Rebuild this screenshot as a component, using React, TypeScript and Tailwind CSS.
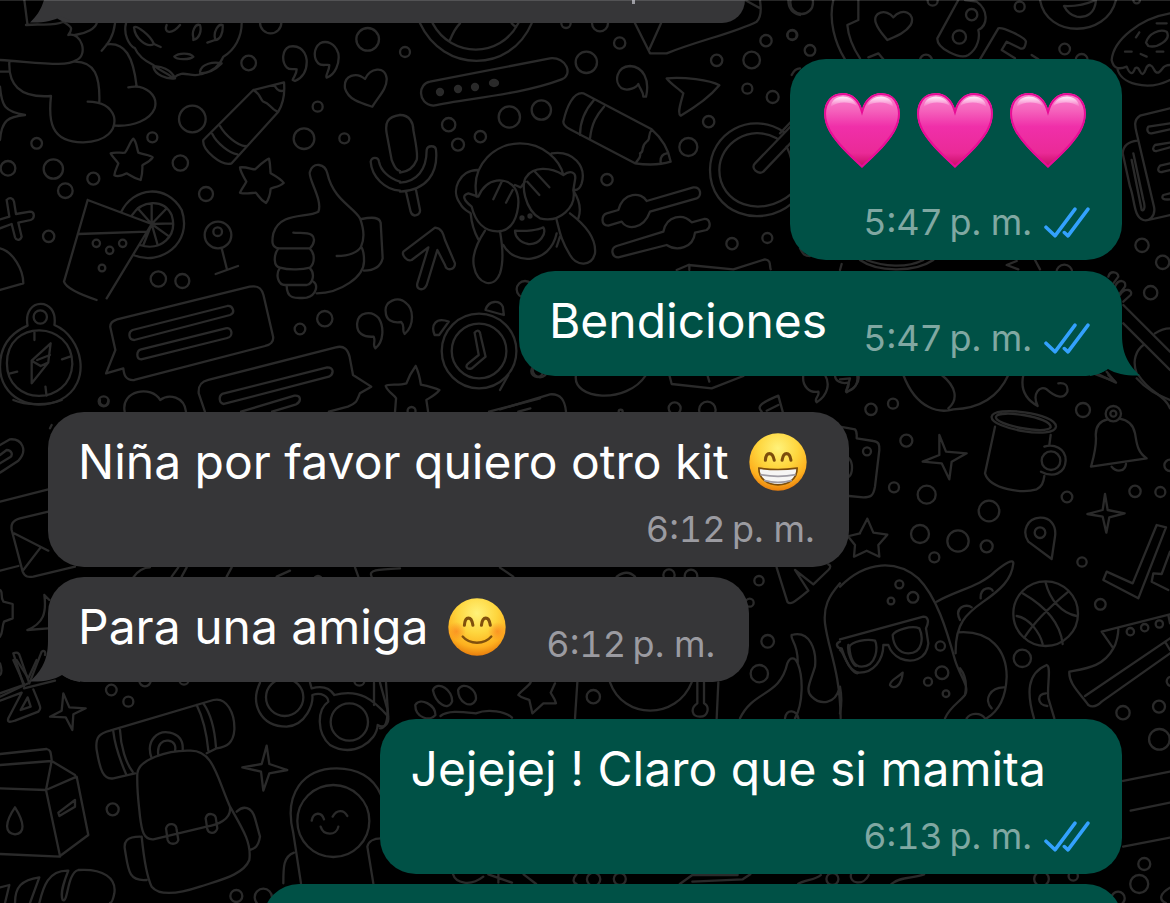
import type { ReactNode } from "react";

type Dot = [number, number, number];

function Patch({ x, y, sx = 1 / 3, sy = 1 / 3, d, dots }: { x: number; y: number; sx?: number; sy?: number; d: string; dots: Dot[] }) {
  return (
    <g transform={`translate(${x} ${y}) scale(${sx} ${sy})`}>
      <path d={d} vectorEffect="non-scaling-stroke" />
      {dots.map(([cx, cy, r], i) => (
        <ellipse key={i} cx={cx} cy={cy} rx={(r / sx) * (1 / 3)} ry={r} vectorEffect="non-scaling-stroke" />
      ))}
    </g>
  );
}

function Wallpaper() {
  return (
    <svg
      aria-hidden="true"
      className="absolute top-0 left-0"
      width="1170"
      height="903"
      viewBox="0 0 1170 903"
      fill="none"
      stroke="#2a2a2a"
      strokeWidth="2.3"
      strokeLinecap="round"
      strokeLinejoin="round"
    >
      {/* dog, donut, crayon, drink, thumbs up */}
      <Patch
        x={0}
        y={0}
        d={[
          "M73 0 L82 70 M78 75 C120 70 160 80 190 65 C215 80 220 85 205 105 C245 95 265 165 230 180 C200 200 140 190 0 180",
          "M28 185 C25 250 55 295 153 288 C145 360 150 428 250 427 C320 425 350 390 342 350 C330 315 300 305 263 305 M298 305 C300 230 285 185 225 185 M0 215 H28",
          "M225 105 C260 100 285 85 290 70 M345 70 C340 110 325 130 305 152 M320 133 C375 125 400 170 410 260 M385 262 C440 250 475 290 464 325 C450 360 400 380 345 377",
          "M0 260 C5 320 15 335 75 345 C25 350 5 360 0 420",
          "M378 70 C370 100 385 135 405 145 C415 170 440 185 460 195 C480 215 500 215 520 235 C550 205 570 235 605 222 C640 215 660 195 670 170 C705 150 725 110 725 70",
          "M402 82 C410 75 450 105 462 132 C440 145 405 115 402 82Z M462 132 L482 141 M500 75 C490 100 515 105 540 75 M580 112 C575 95 585 70 600 75 C605 90 600 115 580 120Z M645 115 C640 95 655 70 668 75 C670 100 660 120 645 120 L622 128",
          "M523 170 C535 158 570 158 580 170 C570 180 530 180 523 170Z M460 200 C480 195 515 210 525 235 C500 238 465 225 460 200Z M600 215 C605 190 640 185 665 190 C650 205 625 220 600 220",
          "M885 243 C905 235 922 215 920 180 C915 145 890 135 868 140 C845 150 845 185 860 202 C870 212 885 205 890 208 C890 225 880 230 878 240Z M980 233 C1005 225 1020 190 1015 160 C1005 130 980 120 960 130 C940 145 940 175 955 190 C965 200 980 192 988 195 C988 215 975 225 980 233Z",
          "M1035 265 C1030 225 1070 215 1095 237 C1110 205 1155 195 1160 235 C1162 265 1135 290 1117 320 C1085 310 1045 300 1035 265Z",
          "M610 420 L760 270 L852 247 C855 280 850 310 835 335 L695 490 C665 500 605 450 610 420Z M760 270 C785 285 780 300 790 305 C810 310 810 325 832 335 M823 255 C830 270 840 275 850 272 M637 402 C650 430 690 460 712 463 M660 378 C675 405 715 440 738 438",
          "M400 416 C410 425 410 445 415 458 C435 465 450 465 458 472 C450 485 435 490 427 496 C428 515 425 530 422 540 C400 535 390 525 380 520 C365 528 350 530 343 526 C345 510 352 500 355 490 C345 475 332 465 332 460 C345 455 365 460 375 458 C385 445 390 425 400 416Z",
          "M807 476 C812 495 810 510 812 520 C830 530 845 540 851 549 C840 560 820 562 812 566 C810 590 805 600 798 609 C780 600 775 585 767 578 C745 580 725 583 720 578 C725 565 735 555 739 545 C730 530 720 510 720 502 C740 500 755 508 765 508 C780 495 795 480 807 476Z",
          "M263 600 L192 845 C200 870 260 890 290 900 M263 600 L455 672 L320 895 M235 702 L442 695",
          "M363 637 C400 560 500 550 545 630 C580 730 480 800 400 765 M395 647 C425 600 490 595 515 645 C535 710 480 755 420 735 M455 672 V610 M455 672 L413 625 M455 672 L498 627 M455 672 L518 670 M455 672 L508 710 M455 672 L473 735 M455 672 L430 735",
          "M20 600 C30 590 40 595 42 605 L48 642 L90 635 C105 635 105 655 92 660 L55 668 L65 710 C60 725 48 720 45 712 L35 672 L0 685 M0 658 L28 650 L20 600",
          "M665 745 L680 805 M647 822 L714 798 M0 745 C40 755 70 810 70 850 L0 870",
          "M955 635 C970 600 920 530 930 515 C940 485 975 490 982 520 C1000 600 1060 620 1080 655 C1095 695 1090 725 1083 740 C1075 755 1050 768 1010 768 M955 635 C920 655 840 635 820 700 C815 725 815 742 835 745 H930 C945 730 945 712 935 705 C920 695 900 700 880 698 M835 745 C820 765 820 800 840 803 C870 812 910 808 930 803 C945 790 945 760 930 747 M840 803 C825 825 835 855 855 855 H920 C940 850 945 820 930 805 M860 857 C860 900 890 895 920 893 C950 885 955 855 940 845 M950 880 C1020 880 1095 830 1092 780 C1092 755 1087 745 1083 740 M1085 657 C1120 650 1138 652 1142 668 L1148 775 C1142 800 1120 812 1092 812",
          "M1200 345 C1160 350 1155 370 1160 400 L1175 480 C1185 505 1190 510 1200 513 M1112 485 C1115 470 1135 470 1137 485 C1142 510 1165 535 1200 545 M1112 485 C1115 530 1155 570 1200 572",
        ].join(" ")}
        dots={[[812, 68, 32], [746, 189, 22], [1103, 118, 34], [577, 357, 40], [953, 320, 15], [912, 416, 31], [1033, 415, 15], [457, 412, 15], [541, 489, 23], [110, 430, 16], [24, 505, 22], [160, 507, 29], [280, 536, 18], [196, 572, 22], [618, 582, 21], [146, 709, 17], [475, 837, 23], [547, 843, 21], [289, 730, 11], [329, 751, 11], [368, 730, 11], [306, 804, 10], [654, 705, 40], [653, 695, 13]]}
      />
      {/* gauge, field, crayon, cursor, monkey, sliders */}
      <Patch
        x={400}
        y={0}
        d={[
          "M60 70 C130 220 330 220 395 70 M98 70 C155 175 300 175 355 70 M150 120 C160 95 170 80 180 70 M335 70 L348 82",
          "M90 245 L450 175 C500 170 520 225 485 238 C360 285 200 295 100 317 C50 310 55 250 90 245Z",
          "M490 365 C500 320 520 275 550 280 L755 388 C780 410 805 445 812 485 C780 495 740 495 705 490 L510 388 C495 380 490 372 490 365Z M540 405 C540 360 555 330 582 300 M570 415 C575 370 590 345 612 320 M755 390 C740 405 755 415 740 425 C720 440 735 455 720 460 C725 475 710 480 707 490 M782 488 C780 470 790 462 800 460",
          "M738 290 C750 240 730 200 690 198 C650 200 640 245 665 265 C685 275 710 262 715 252 C720 268 730 275 730 290Z",
          "M800 235 C850 230 930 240 958 256 C930 290 880 325 842 347 C830 340 845 300 850 280 C835 265 810 250 800 235Z",
          "M705 70 L750 160 H800 C900 120 1000 100 1070 65 C1090 45 1080 10 1080 0 M748 148 L783 70 M1035 0 L1080 25 M1165 0 C1165 25 1180 40 1200 45",
          "M0 345 C30 345 40 370 40 390 C45 420 55 460 50 480 C40 505 25 515 0 518 M0 548 C50 545 80 510 80 450 C82 435 107 435 108 450 C115 520 80 570 0 575 M18 575 L32 635 C38 655 62 645 60 630 L48 570",
          "M105 683 C125 685 130 700 135 720 L165 790 C165 810 140 815 135 795 L112 750 L80 855 C70 875 48 870 52 850 L85 742 L35 780 C20 785 5 765 10 755 L105 683Z",
          "M230 590 C210 490 290 430 360 430 C430 430 480 480 490 525 M490 525 C510 510 530 515 525 540 L520 570 C530 620 480 670 420 655 C375 630 360 550 380 530 C400 500 450 500 490 525 M235 590 C260 530 320 530 345 565 C365 600 355 680 305 693 C250 700 225 660 215 620 C190 600 185 585 205 580 L235 590 M345 555 L362 562 L375 545",
          "M232 510 C180 510 150 570 180 610 C190 630 205 635 210 638 M455 460 C520 450 560 500 545 550 C540 565 535 570 525 570 M212 640 C215 675 225 700 235 718 M520 572 C545 610 542 635 535 655 M305 545 L280 598 M338 570 L318 608 M405 515 L448 562 M382 545 L418 585",
          "M345 692 C380 695 415 690 430 682 C440 700 420 735 385 732 C360 728 345 710 345 692Z M255 692 C230 730 215 770 222 800 C230 850 280 870 300 820 C310 790 310 750 300 695 M510 640 C550 670 590 710 585 760 C575 800 530 800 510 765 C485 725 480 700 470 660 M310 735 C340 795 450 795 470 700 M470 740 L480 710",
          "M740 603 L880 562 C905 560 905 590 890 595 L750 635 C730 690 680 690 665 665 L625 677 C600 675 605 645 620 640 L655 630 C670 575 725 575 740 603Z M790 695 L650 738 C630 745 635 772 655 772 L800 735 C830 755 880 745 885 698 L920 690 C935 680 930 655 912 657 L875 667 C850 640 800 645 790 695Z",
          "M1150 395 C1050 330 930 400 930 510 C930 640 1080 690 1176 610 M1130 415 C1050 370 958 430 958 510 C958 610 1080 660 1176 580 M1176 375 L1065 490 C1050 505 1075 525 1090 515 L1176 425 M830 810 L865 795 L1000 808 L1095 778 C1115 780 1108 800 1112 808 M868 795 V810",
        ].join(" ")}
        dots={[[15, 156, 15], [600, 70, 24], [498, 70, 14], [659, 129, 17], [559, 187, 32], [328, 351, 32], [424, 330, 29], [146, 374, 20], [174, 434, 18], [241, 410, 17], [950, 181, 17], [1055, 180, 25], [1098, 122, 17], [1176, 105, 14], [1042, 266, 15], [1118, 291, 18], [926, 365, 17], [865, 441, 27], [621, 539, 17], [996, 731, 17], [1102, 714, 15], [375, 868, 25]]}
      />
      <g fill="#2a2a2a">
        <circle cx="440" cy="92" r="3" />
        <circle cx="458" cy="89" r="3" />
        <circle cx="475" cy="87" r="3" />
        <ellipse cx="494" cy="83" rx="4" ry="3" />
        <circle cx="522" cy="218" r="1.500" />
        <circle cx="530" cy="216" r="1.500" />
      </g>
      {/* phone, letters, donut, newspaper */}
      <Patch
        x={780}
        y={0}
        d={[
          "M160 0 C145 60 165 130 195 178 M235 0 V60 L202 75 C205 110 220 145 240 175 M265 172 L295 160 L310 178",
          "M288 70 C275 35 320 25 340 52 C365 20 410 40 392 75 C375 100 345 110 322 120 C310 105 295 90 288 70Z",
          "M535 0 L472 115 C470 145 540 180 565 165 C595 145 600 110 595 90 C625 75 625 30 590 5 L555 0 M600 178 L655 85 C665 80 735 110 738 125 C735 145 730 148 720 145 L680 125 L665 150 L705 175 M755 165 L775 178",
          "M780 0 C800 115 980 115 1008 0 M852 18 C890 20 925 10 948 0 C945 40 920 55 890 50 C870 45 858 30 852 18Z",
          "M1170 40 C1080 55 1000 120 995 180 C1000 205 1015 210 1040 200 C1050 225 1058 225 1065 205 C1078 195 1080 225 1088 222 C1100 215 1095 195 1110 195 C1125 200 1120 220 1135 218 C1150 210 1145 195 1170 195 M1012 205 C1020 250 1100 275 1170 240 M1098 128 C1105 100 1140 85 1160 95 C1175 120 1130 145 1105 138Z M1130 70 H1160 M1078 97 L1068 112 M1035 155 H1055 M1082 162 L1100 170 M1130 155 H1150",
          "M1170 325 L1080 347 C1060 360 1065 380 1070 400 L1122 620 C1128 650 1105 665 1090 660 C1060 650 1065 600 1050 560 L1028 460 C1030 435 1045 425 1072 422 M1105 660 L1170 645 M1060 460 L1090 600 C1098 625 1090 635 1085 630 L1055 480 M1170 370 L1105 380 C1098 390 1105 402 1115 400 L1170 388 M1170 428 L1125 435 C1115 445 1120 455 1130 453 L1170 442 M1170 490 L1140 497 C1130 508 1135 520 1150 515 L1170 510 M1170 580 L1150 585 C1142 595 1150 600 1170 598",
          "M0 400 L38 360 M20 440 C40 480 45 520 35 570 M35 225 C42 210 50 205 60 205 M60 745 C70 765 75 768 90 768 M240 780 C290 815 400 820 460 780 M260 780 C310 800 380 805 430 780 M185 792 L180 810 M710 783 L680 795 L715 808 M765 780 L780 808",
          "M985 830 C990 810 1015 815 1015 830 L1000 850 M1005 860 C1015 835 1040 840 1035 860 L1018 882 M1020 885 C1035 860 1060 870 1052 885 L1030 905 M1030 915 L1170 1055 M1030 970 L1170 1110 M1125 1000 C1140 990 1155 985 1170 985 M1070 1120 C1055 1080 1070 1050 1090 1035 M980 1115 L1005 1145 L940 1120 M1070 1135 C1110 1180 1150 1190 1170 1200",
        ].join(" ")}
        dots={[[37, 105, 15], [90, 151, 16], [65, 8, 34], [458, 2, 15], [719, 20, 15], [575, 44, 17], [538, 111, 20], [438, 182, 18], [854, 147, 16], [905, 180, 18], [1070, 0, 10], [1086, 736, 20], [1148, 787, 20], [1112, 878, 20], [853, 818, 24]]}
      />
      {/* compass, speech boxes, alarm clock */}
      <Patch
        x={0}
        y={260}
        sx={0.3444}
        sy={0.3333}
        d={[
          "M80 197 C65 110 170 110 158 195 C240 230 270 370 175 420 C90 460 0 410 0 320 C0 250 40 215 80 197 M20 310 C20 175 210 180 210 312 C205 440 20 440 20 310Z M100 217 V240 M180 298 L203 290 M30 340 L50 335 M132 380 L135 407 M147 250 L92 302 V370 L140 308 L147 250 M92 302 L118 318 L140 308 M108 300 L145 285",
          "M340 178 L725 80 C750 75 760 85 765 105 L793 230 C795 245 785 255 770 258 L390 360 C365 362 360 345 358 325 L308 340 L335 270 L320 200 C320 190 328 182 340 178Z M385 210 L660 138 C675 135 685 158 668 165 L390 240 C372 240 372 215 385 210Z M410 268 L655 205 C675 200 678 230 660 234 L410 298 C395 298 395 272 410 268Z",
          "M595 455 L577 400 C575 375 585 365 605 360 L975 262 C1000 255 1010 270 1015 290 L1025 345 L1078 380 L1045 400 C1035 425 1035 430 1010 440 L955 455 M645 402 L950 322 C970 322 970 342 955 350 L650 432 C635 430 635 408 645 402Z M700 455 L855 407 C875 405 875 425 860 433 L790 455",
          "M362 455 C350 390 440 375 465 420 C490 400 535 410 540 455",
          "M1090 265 C1115 245 1115 200 1100 175 C1080 150 1040 155 1037 190 C1035 220 1055 232 1085 230 C1092 245 1080 255 1090 265Z M1175 222 C1205 195 1200 145 1180 130 C1155 105 1115 125 1120 155 C1120 180 1140 190 1165 186 C1178 200 1165 210 1175 222Z",
          "M1207 318 C1215 335 1220 360 1222 374 C1240 378 1265 385 1276 390 C1265 405 1245 415 1238 420 L1243 455 M1207 318 C1195 335 1185 355 1180 370 C1160 378 1125 370 1120 378 C1125 395 1145 405 1150 415 L1147 455",
          "M1262 225 C1250 195 1265 170 1303 185 L1275 225Z M1410 148 C1420 120 1450 120 1460 140 L1463 165 L1410 150 M1378 218 C1388 205 1395 215 1395 225 L1410 290 L1370 325 C1355 330 1350 318 1360 310 L1390 285Z",
          "M1420 455 L1568 415 M1505 455 L1540 445",
        ].join(" ")}
        dots={[[117, 171, 20], [301, 424, 15], [871, 207, 16], [943, 176, 23], [1391, 273, 112], [1391, 273, 82], [1195, 453, 12], [1560, 333, 18]]}
      />
      {/* paperclip, envelope, gear */}
      <Patch
        x={0}
        y={400}
        d={[
          "M0 135 L30 118 C65 115 85 150 55 182 L0 218 M0 165 L20 150 C35 150 40 165 30 172 L0 190",
          "M0 305 L145 268 M145 335 L60 355 C35 362 33 375 35 390 L68 515 C75 532 85 532 100 530 L225 500 M42 400 L145 452 M70 510 L122 442 M0 512 L55 498",
          "M0 570 C10 575 0 590 10 605 L38 612 V655 L12 665 C5 680 10 695 0 710 M133 585 L148 600 M133 585 C140 640 130 670 82 690 L145 685 M0 790 C5 805 5 820 0 825",
          "M40 760 C50 755 58 758 60 770 L88 850 L125 755 C132 750 138 755 135 765 M40 760 L72 860 M0 890 L85 850",
          "M40 0 C80 18 150 15 185 0 M300 0 C295 20 325 25 325 0 M150 85 L155 75",
          "M400 532 C415 510 435 502 450 502 M535 502 L515 530 M560 502 L545 530 M680 530 L695 502 M830 530 L870 512 M1065 502 L1075 530 M1115 530 C1105 510 1130 508 1200 505",
        ].join(" ")}
        dots={[[954, 540, 12]]}
      />
      {/* juice box, sparkles, backpack, binoculars, hooded figure */}
      <Patch
        x={0}
        y={660}
        d={[
          "M40 0 L72 72 M50 0 L85 55 L110 0 M0 100 L70 75 M72 85 L165 62 M65 98 L0 122 M65 98 L25 175 C20 190 35 185 45 182 L115 155 C125 145 120 140 115 125 L100 88 M83 112 L62 150 L92 140Z",
          "M190 100 L208 142 L257 145 L220 163 L217 210 L197 172 L150 170 L185 152Z M800 257 L808 312 L862 330 L808 340 L790 392 L783 335 L727 322 L785 312Z",
          "M0 282 L140 267 C152 270 152 275 155 300 M0 315 L155 303 M155 303 L138 390 L0 385 M155 303 L225 345 M138 390 L230 350 L265 525 L180 588 L138 390 M0 582 L180 590 M45 442 C75 490 75 520 45 523 C15 520 12 490 45 442Z M175 458 L225 420 V440 L178 468Z",
          "M290 270 C285 230 300 220 330 212 L640 120 C680 110 705 160 703 210 C700 250 680 260 650 265 L620 280 M290 270 C300 330 310 360 340 355 L405 340 M340 215 C345 260 360 300 378 342 M360 210 C362 260 378 310 398 335 M590 135 C610 175 620 220 625 272 M610 130 C635 165 645 220 648 262",
          "M455 295 C435 240 475 210 510 218 C540 225 550 245 548 270 M475 285 C470 250 490 240 505 242 C525 245 528 260 525 272",
          "M412 340 C415 300 500 270 570 272 C640 270 650 350 690 440 C695 480 650 495 620 500 L460 538 C430 540 425 510 420 470 C415 420 410 390 412 340 M425 530 C430 580 440 650 455 680 C480 710 540 700 600 680 C660 660 730 645 748 600 C755 550 730 510 690 440 M420 530 C380 530 370 545 375 570 C385 630 385 665 440 660 M710 455 C730 435 755 440 765 475 L780 530 C775 560 765 565 750 570",
          "M498 505 C505 485 530 490 530 510 L535 540 C530 555 508 555 503 540Z M617 475 C622 455 648 460 648 478 L652 505 C645 525 625 520 622 508Z",
          "M780 68 C750 130 780 200 860 200 C920 195 940 130 937 105 C965 95 985 110 985 125 C950 150 950 220 990 255 C1060 295 1130 245 1133 195 C1150 205 1165 195 1165 175 L1158 68 M930 68 L935 85 C970 75 990 85 1003 105 C1080 85 1120 120 1165 170 M1122 68 V135",
          "M903 670 L880 520 C850 400 910 325 1010 325 C1070 325 1120 350 1143 405 M850 670 C850 620 850 590 882 578 M1120 670 L1102 560 C1105 545 1120 535 1143 535 M935 482 C940 455 965 455 972 478 M998 470 C1010 448 1032 448 1042 468 M962 500 C970 528 1010 528 1015 500",
          "M0 682 L28 675 L15 729 M45 729 C45 680 65 660 118 652 L90 729 M118 729 C130 680 145 630 205 632 C190 670 180 700 188 720 C205 730 200 640 235 630 C310 625 350 655 343 700 C340 715 335 729 330 729",
        ].join(" ")}
        dots={[[334, 90, 16], [385, 125, 15], [338, 448, 18], [435, 62, 17], [552, 60, 14], [1078, 62, 15], [854, 112, 56], [1048, 186, 56], [1000, 483, 108], [709, 708, 18], [790, 712, 26]]}
      />
      {/* mug, bell, sparkles, octopus, basketball, shoe */}
      <Patch
        x={840}
        y={370}
        d={[
          "M0 28 L30 25 L18 65 C45 60 55 40 52 18 M190 15 C230 120 300 130 340 118 C430 115 480 70 505 15 M305 15 C350 50 355 90 325 115 M550 15 C540 60 560 90 593 108 C575 70 600 45 620 58 C645 80 670 90 682 65 C685 45 675 38 655 40 M780 15 L828 38 L805 15 M895 15 C930 70 975 75 990 115",
          "M0 170 L45 178 C52 185 50 195 50 205 L100 213 C118 215 118 225 118 240 L105 350 C100 380 90 382 70 382 L27 378 M27 265 C40 280 38 310 27 320",
          "M298 195 L318 245 L380 250 L335 275 L328 328 L305 280 L248 275 L298 255Z M795 372 L803 420 L854 430 L808 442 L799 488 L788 440 L742 432 L788 420Z",
          "M455 140 C460 105 650 130 648 170 C645 210 450 175 455 140Z M468 140 C475 118 635 140 632 172 C620 195 460 165 468 140Z M465 170 L435 310 C450 360 550 370 590 358 C605 350 610 340 613 318 M632 195 L628 225 M613 230 C640 220 678 235 677 272 C675 310 640 325 603 305",
          "M803 148 C770 155 765 180 768 205 C768 240 760 265 753 290 L920 265 C890 245 890 215 885 190 C880 165 865 150 838 146 M815 290 C830 308 855 305 858 282",
          "M82 446 L100 488 L142 494 L115 525 L118 560 L80 542 L42 560 L45 525 L25 500 M60 488 L82 446 M27 498 L60 490",
          "M635 567 L645 500 C650 465 630 442 600 443 C560 445 545 485 565 515Z",
          "M790 630 L800 605 L878 640 L950 465 L978 472 L895 685Z M990 545 L965 612 L940 610 L935 635 L985 660",
          "M0 650 C80 570 170 570 235 625 C290 680 320 780 345 870 C360 920 390 950 375 975 C355 1000 330 1010 315 1045 M290 695 C350 660 420 650 465 605 C495 580 520 565 520 580 C515 630 480 660 430 695 C380 730 345 760 347 850 M355 787 C450 780 500 840 500 920 C498 980 480 1020 440 1045 M360 895 C380 920 380 950 375 975 M360 750 C340 710 380 700 395 712 M422 685 C420 650 455 650 458 662 M495 952 C450 950 430 990 455 1015 M380 1045 C390 1030 420 1025 435 1045",
          "M0 808 L250 740 C265 740 268 755 258 775 L265 820 C260 870 215 880 180 865 C160 855 150 840 145 825 L130 825 C130 870 100 910 55 908 C20 900 15 850 0 840 M28 830 C35 815 80 805 105 812 C115 830 110 890 65 890 C40 890 30 860 28 830Z M158 795 C165 780 215 765 238 775 C250 800 250 850 205 850 C175 850 160 825 158 795Z M188 908 C170 925 150 930 150 945 C160 960 185 950 188 908Z M0 1030 C8 990 0 950 0 950",
          "M548 670 C600 700 660 750 668 822 M530 738 C570 745 600 790 608 822 M617 638 C630 690 665 730 710 738 M685 665 C630 710 580 760 553 803",
          "M990 733 L785 785 L820 835 C830 820 835 790 835 778 M820 835 C790 890 740 895 688 905 C685 940 720 970 745 1005 C760 1015 775 1005 785 995 L990 850 M735 978 L990 805 M975 815 L990 840 M985 735 L990 760",
          "M582 1045 C560 970 560 910 620 885 C635 890 620 950 625 985 L643 1045 M618 970 C590 970 590 1005 622 1008",
        ].join(" ")}
        dots={[[93, 118, 17], [159, 101, 15], [199, 212, 18], [162, 352, 15], [81, 244, 12], [260, 374, 27], [240, 492, 27], [283, 562, 15], [354, 513, 32], [447, 423, 31], [440, 529, 18], [681, 381, 16], [729, 120, 21], [820, 131, 23], [820, 131, 9], [633, 272, 28], [600, 488, 16], [726, 576, 14], [781, 703, 16], [885, 364, 17], [961, 366, 15], [990, 286, 17], [178, 643, 12], [219, 682, 16], [153, 693, 10], [301, 828, 14], [306, 908, 19], [264, 935, 12], [318, 971, 10], [617, 731, 97], [547, 865, 26], [871, 785, 11], [914, 773, 11], [958, 762, 11], [849, 1028, 20], [957, 1010, 18], [994, 934, 14]]}
      />
      {/* doodles between the middle bubbles */}
      <Patch
        x={500}
        y={370}
        d={[
          "M0 60 L25 15 M228 15 C215 90 380 105 438 15 M508 15 L515 42 L635 55 L730 18 M622 15 L628 35 M0 118 L150 73 C185 70 195 95 198 125 M910 15 C905 50 930 70 955 65 C960 80 940 85 950 97 C985 75 990 40 975 15 M1005 15 C1005 35 1025 42 1045 38 C1050 55 1035 55 1040 67 C1070 50 1080 35 1075 15",
          "M785 125 C770 110 780 100 835 77 L848 125 M800 122 L835 105",
          "M830 593 L862 695 C870 705 880 700 925 662 L885 600 L940 643 L985 600 C995 590 990 585 985 583",
          "M1020 640 C985 680 970 710 975 760 C985 840 1020 900 1022 1045 M1020 815 C1005 820 1010 835 1025 835 C1045 900 1070 915 1075 908 M1045 825 C1040 850 1060 885 1068 888",
          "M875 795 C930 780 950 840 945 890 C930 940 915 960 935 980 C960 1005 1005 1005 1018 955 M875 795 C870 810 895 820 893 880 C910 920 910 1000 885 1045 M720 1045 C760 960 840 980 862 880 C870 860 885 860 893 880 M855 1045 C860 1015 890 1020 895 1045",
          "M330 937 C370 1050 530 1050 575 937 M232 937 L225 1045 M655 937 L650 1045 M592 937 V1000 C570 1015 575 1040 600 1040 C625 1040 630 1010 612 1000 V937",
          "M92 937 C85 950 60 965 55 975 C65 985 80 985 88 990 L97 1030 L130 1000 L168 1000 C165 985 155 975 152 968 L165 940",
          "M0 593 L40 620 M350 620 C370 605 390 605 405 620",
        ].join(" ")}
        dots={[[120, 0, 22], [524, 115, 18], [622, 120, 25], [362, 125, 6], [777, 632, 14], [749, 698, 12], [803, 814, 19], [778, 911, 26], [280, 980, 20], [507, 615, 17], [573, 618, 19]]}
      />
      {/* paw, strings, lower right */}
      <Patch
        x={380}
        y={680}
        sx={0.5038}
        sy={0.3333}
        d={[
          "M0 8 L15 90 C15 130 8 145 0 145 M105 30 C115 0 145 30 143 65 C135 95 110 70 105 30Z M155 30 C165 0 195 30 190 60 C180 90 155 65 155 30Z M70 75 C80 50 110 75 110 105 C100 125 70 115 70 75Z M120 108 C135 90 160 95 190 100 C215 85 250 95 262 113",
          "M1475 303 L1568 275 M1490 392 L1568 368 M1475 500 L1568 473",
          "M145 583 C150 610 180 620 205 590 M215 583 L262 608 M235 583 V608 M285 583 L310 612 M390 583 C380 600 385 610 390 612 M595 612 L620 585 L710 585 M620 605 L720 598 L735 583 M830 612 C840 600 865 600 875 585 M935 583 C930 610 960 620 970 585 M1015 612 C1030 590 1060 595 1080 583 M1568 623 C1548 640 1545 660 1560 669",
        ].join(" ")}
        dots={[[1547, 178, 31], [1517, 552, 18], [1507, 612, 27], [424, 598, 20], [476, 597, 18], [898, 597, 18], [1313, 597, 22], [1376, 588, 14], [1465, 655, 20]]}
      />
    </svg>
  );
}

function Tail({ side }: { side: "left" | "right" }) {
  const left = side === "left";
  return (
    <svg
      aria-hidden="true"
      className={left ? "absolute bottom-0 -left-[18px] text-[#363638]" : "absolute -right-[18px] bottom-0 -scale-x-100 text-[#005146]"}
      width="50"
      height="41"
      viewBox="0 0 50 41"
      fill="currentColor"
    >
      <path d="M18 0C18 22 9 32 0 40.500C12 41 24 39 32 34C38 38 44 40 50 41V0Z" />
    </svg>
  );
}

function Ticks() {
  return (
    <svg
      role="img"
      aria-label="Leído"
      width="46"
      height="31"
      viewBox="0 0 138 92"
      fill="none"
      stroke="#33a1fd"
      strokeWidth="10.5"
      strokeLinecap="round"
      strokeLinejoin="round"
    >
      <path d="M6 60L33 86L93 6M61 76L72 86L132 6" />
    </svg>
  );
}

function Stamp({ hour, sent }: { hour: string; sent?: boolean }) {
  return (
    <div className={sent ? "flex items-center gap-3 self-end text-[#80a8a2]" : "flex items-center self-end text-[#9b9ba1]"}>
      <time className="text-[36px] leading-[44px] font-normal whitespace-nowrap tabular-nums">{hour}&#8201;p. m.</time>
      {sent && <Ticks />}
    </div>
  );
}

function Bubble({ sent, tail, className, children }: { sent?: boolean; tail?: boolean; className: string; children?: ReactNode }) {
  const tone = sent ? "self-end bg-[#005146] pr-8" : "self-start bg-[#363638] pr-[34px]";
  return (
    <article className={`relative flex rounded-[36px] pb-4 pl-[30px] ${tone} ${className}`}>
      {tail && <Tail side={sent ? "right" : "left"} />}
      {children}
    </article>
  );
}

function Message({ children }: { children: ReactNode }) {
  return <p className="flex items-center text-[48px] leading-[60px] whitespace-nowrap text-white">{children}</p>;
}

function Heart({ id }: { id: string }) {
  const outline = "M113 225C92 203 45 163 18 116C-12 60 5 0 58 0C85 0 105 20 113 47C121 20 141 0 168 0C221 0 238 60 208 116C181 163 134 203 113 225Z";
  return (
    <svg role="img" aria-label="Corazón rosa" width="76" height="75" viewBox="3 0 220 225" preserveAspectRatio="none">
      <defs>
        <linearGradient id={`${id}-fill`} x1="0" y1="0" x2="0" y2="1">
          <stop offset="0" stopColor="#fb86d0" />
          <stop offset="0.22" stopColor="#f565bd" />
          <stop offset="0.45" stopColor="#f02fa9" />
          <stop offset="0.8" stopColor="#ea2a97" />
          <stop offset="1" stopColor="#c4095f" />
        </linearGradient>
        <linearGradient id={`${id}-shine`} x1="0" y1="0" x2="0" y2="1">
          <stop offset="0" stopColor="#fff" stopOpacity="0.85" />
          <stop offset="1" stopColor="#fff" stopOpacity="0" />
        </linearGradient>
        <clipPath id={`${id}-clip`}>
          <path d={outline} />
        </clipPath>
      </defs>
      <g clipPath={`url(#${id}-clip)`}>
        <path d={outline} fill={`url(#${id}-fill)`} stroke="#e80c96" strokeWidth="12" />
        <path d="M22 42C28 0 84 2 98 38C76 26 44 24 22 42ZM204 42C198 0 142 2 128 38C150 26 182 24 204 42Z" fill={`url(#${id}-shine)`} />
      </g>
    </svg>
  );
}

function Face({ kind }: { kind: "grin" | "blush" }) {
  return (
    <svg role="img" aria-label={kind === "grin" ? "Cara sonriente" : "Cara sonrojada"} className="ml-5" width="58" height="58" viewBox="0 0 170 170">
      <defs>
        <radialGradient id={`${kind}-face`} cx="0.5" cy="0.26" r="0.76">
          <stop offset="0" stopColor="#fff27a" />
          <stop offset="0.45" stopColor="#fed63e" />
          <stop offset="0.78" stopColor="#fdb01f" />
          <stop offset="1" stopColor="#e5780c" />
        </radialGradient>
        <radialGradient id={`${kind}-cheek`}>
          <stop offset="0" stopColor="#f9701b" stopOpacity="0.55" />
          <stop offset="1" stopColor="#f9701b" stopOpacity="0" />
        </radialGradient>
      </defs>
      <circle cx="85" cy="85" r="84" fill={`url(#${kind}-face)`} />
      {kind === "grin" ? (
        <>
          <path d="M48 80C50 54 69 54 74 80M97 80C101 54 119 54 123 80" fill="none" stroke="#7c4d0c" strokeWidth="9" strokeLinecap="round" />
          <path d="M29 103C64 108 106 108 141 103C143 168 27 168 29 103Z" fill="#f6f5f4" stroke="#7c4d0c" strokeWidth="5" />
          <path d="M33 122C65 128 105 128 137 122M44 139C70 146 100 146 126 139" fill="none" stroke="#a09da6" strokeWidth="5" />
        </>
      ) : (
        <>
          <circle cx="25" cy="98" r="28" fill={`url(#${kind}-cheek)`} />
          <circle cx="145" cy="98" r="28" fill={`url(#${kind}-cheek)`} />
          <path d="M48 80C50 52 69 52 73 80M98 80C101 52 120 52 124 80" fill="none" stroke="#80500d" strokeWidth="9" strokeLinecap="round" />
          <path d="M43 113C63 137 107 137 127 113" fill="none" stroke="#80500d" strokeWidth="7" strokeLinecap="round" />
        </>
      )}
    </svg>
  );
}

export default function App() {
  return (
    <main lang="es" className="relative h-screen overflow-hidden bg-black font-['Inter','Liberation_Sans',sans-serif]">
      <Wallpaper />
      <section aria-label="Conversación" className="relative flex flex-col px-12">
        <div className="relative h-[23px] w-[697px] self-start rounded-b-[36px] bg-[#363638]">
          <svg aria-hidden="true" className="absolute bottom-0 -left-[18px] text-[#363638]" width="50" height="23" viewBox="0 0 50 23" fill="currentColor">
            <path d="M14 0C11 10 6 17 0 22.500C12 23 24 21 32 16C38 20 44 22 50 23V0Z" />
          </svg>
          <span className="absolute top-0 right-[110px] h-1 w-[3px] bg-[#9b9ba1]" />
        </div>

        <Bubble sent className="mt-9 flex-col gap-8 pt-[34px]">
          <div className="flex gap-[17px] pr-1 pl-1">
            <Heart id="h1" />
            <Heart id="h2" />
            <Heart id="h3" />
          </div>
          <Stamp hour="5:47" sent />
        </Bubble>
        <Bubble sent tail className="mt-[11px] items-end gap-9 pt-5">
          <div className="pb-[9px]">
            <Message>Bendiciones</Message>
          </div>
          <Stamp hour="5:47" sent />
        </Bubble>

        <Bubble className="mt-9 flex-col gap-[15px] pt-5">
          <div className="pr-2">
            <Message>
              Niña por favor quiero otro kit <Face kind="grin" />
            </Message>
          </div>
          <Stamp hour="6:12" />
        </Bubble>
        <Bubble tail className="mt-2.5 items-end gap-10 pt-5">
          <div className="pb-[9px]">
            <Message>
              Para una amiga <Face kind="blush" />
            </Message>
          </div>
          <Stamp hour="6:12" />
        </Bubble>

        <Bubble sent className="mt-[37px] flex-col gap-[15px] pt-5">
          <div className="pr-11">
            <Message>Jejejej ! Claro que si mamita</Message>
          </div>
          <Stamp hour="6:13" sent />
        </Bubble>
        <Bubble sent className="mt-2.5 h-26 w-4/5" />
      </section>
      <div className="absolute inset-x-0 top-0 h-px bg-white/15" />
    </main>
  );
}
